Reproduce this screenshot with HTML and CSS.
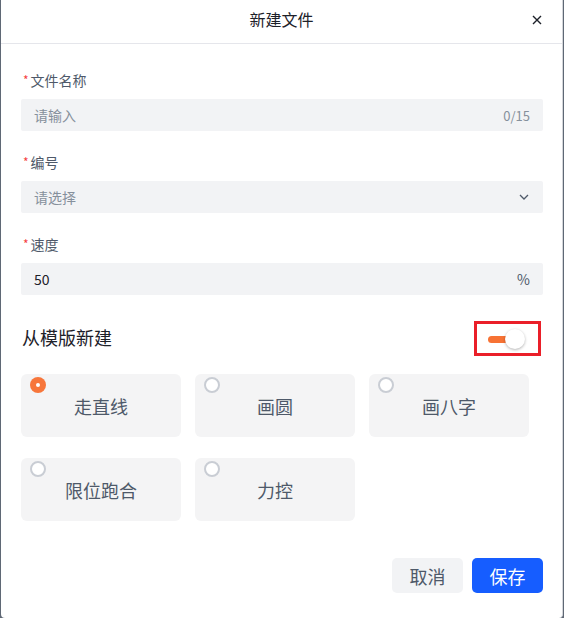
FILE: index.html
```html
<!DOCTYPE html>
<html>
<head>
  <meta charset="utf-8">
  <title>新建文件</title>
  <link rel="stylesheet" href="styles.css">
</head>
<body>
  <div class="dialog">
    <div class="dialog-header">
      <span></span>
      <span class="dialog-title">新建文件</span>
      <span class="close">
        <svg width="10" height="10" viewBox="0 0 10 10"><path d="M1 1L9 9M9 1L1 9" stroke="#1d2129" stroke-width="1.4" fill="none"/></svg>
      </span>
    </div>

    <div class="dialog-body">
      <div class="form-item">
        <label class="label"><span class="star">*</span>文件名称</label>
        <div class="field">
          <span class="placeholder">请输入</span>
          <span class="suffix count">0/15</span>
        </div>
      </div>

      <div class="form-item">
        <label class="label"><span class="star">*</span>编号</label>
        <div class="field">
          <span class="placeholder">请选择</span>
          <svg class="chevron" width="10" height="6" viewBox="0 0 10 6"><path d="M1 1L5 5L9 1" stroke="#4e5969" stroke-width="1.3" fill="none"/></svg>
        </div>
      </div>

      <div class="form-item">
        <label class="label"><span class="star">*</span>速度</label>
        <div class="field">
          <span class="value">50</span>
          <span class="suffix">%</span>
        </div>
      </div>

      <div class="template-row">
        <span class="template-title">从模版新建</span>
        <div class="switch-box">
          <div class="switch">
            <span class="track"></span>
            <span class="thumb"></span>
          </div>
        </div>
      </div>

      <div class="cards">
        <div class="card"><span class="radio checked"></span>走直线</div>
        <div class="card"><span class="radio"></span>画圆</div>
        <div class="card"><span class="radio"></span>画八字</div>
        <div class="card"><span class="radio"></span>限位跑合</div>
        <div class="card"><span class="radio"></span>力控</div>
      </div>
    </div>

    <div class="dialog-footer">
      <button class="btn btn-cancel">取消</button>
      <button class="btn btn-save">保存</button>
    </div>
  </div>
</body>
</html>
```

FILE: styles.css
```css
html, body {
  margin: 0;
  height: 100%;
}
body {
  background-color: #5f6875;
  font-family: "Noto Sans CJK SC", "Noto Sans", sans-serif;
  overflow: hidden;
}
.dialog {
  margin-left: 1px;
  width: 562px;
  height: 618px;
  background: #fff;
  border-right: 1px solid #d4d6da;
  border-radius: 0 0 4px 4px;
  box-sizing: border-box;
}
.dialog-header {
  height: 44px;
  padding-bottom: 5px;
  border-bottom: 1px solid #e5e6eb;
  display: grid;
  grid-template-columns: 1fr auto 1fr;
  align-items: center;
  box-sizing: border-box;
}
.dialog-title {
  font-size: 16px;
  line-height: 22px;
  color: #1d2129;
}
.close {
  justify-self: end;
  margin-right: 20px;
  display: flex;
  margin-top: 1px;
}
.dialog-body {
  padding: 25px 19px 0 20px;
}
.form-item {
  margin-bottom: 20px;
}
.label {
  display: flex;
  align-items: center;
  height: 22px;
  font-size: 14px;
  line-height: 22px;
  color: #4e5969;
  margin-bottom: 8px;
}
.star {
  color: #f53f3f;
  font-size: 12px;
  line-height: 12px;
  margin: 0 2px 0 2px;
}
.field {
  height: 32px;
  background: #f2f3f5;
  border-radius: 2px;
  display: flex;
  align-items: center;
  justify-content: space-between;
  padding: 0 13px 0 13px;
  font-size: 14px;
}
.placeholder {
  color: #86909c;
}
.value {
  color: #1d2129;
}
.suffix {
  color: #4e5969;
}
.count {
  color: #86909c;
  font-size: 13px;
}
.chevron {
  margin-right: 1px;
}
.template-row {
  display: flex;
  align-items: center;
  justify-content: space-between;
  margin-top: 26px;
  height: 35px;
}
.template-title {
  font-size: 18px;
  line-height: 26px;
  color: #1d2129;
  margin-left: 1px;
  margin-bottom: 3px;
}
.switch-box {
  width: 61px;
  height: 29px;
  border: 3px solid #ea1f29;
  display: flex;
  align-items: center;
  justify-content: center;
  margin-right: 2px;
}
.switch {
  position: relative;
  width: 38px;
  height: 22px;
  margin-right: 2px;
}
.track {
  position: absolute;
  left: 0;
  top: 8px;
  width: 26px;
  height: 7px;
  border-radius: 4px;
  background: #f77234;
}
.thumb {
  position: absolute;
  right: 1px;
  top: 1px;
  width: 20px;
  height: 20px;
  border-radius: 50%;
  background: #fff;
  box-shadow: 0 1px 3px rgba(0, 0, 0, 0.3);
}
.cards {
  display: grid;
  grid-template-columns: repeat(3, 160px);
  column-gap: 14px;
  row-gap: 21px;
  margin-top: 18px;
}
.card {
  position: relative;
  height: 63px;
  background: #f4f4f5;
  border-radius: 6px;
  display: flex;
  align-items: center;
  justify-content: center;
  font-size: 18px;
  color: #4e5969;
}
.radio {
  position: absolute;
  left: 9px;
  top: 3px;
  width: 16px;
  height: 16px;
  border-radius: 50%;
  border: 2px solid #c9cdd4;
  background: #fff;
  box-sizing: border-box;
}
.radio.checked {
  border: none;
  background: #f7763b;
}
.radio.checked::after {
  content: "";
  position: absolute;
  left: 6px;
  top: 6px;
  width: 4px;
  height: 4px;
  border-radius: 50%;
  background: #fff;
}
.dialog-footer {
  display: flex;
  justify-content: flex-end;
  gap: 9px;
  padding: 37px 19px 0 0;
}
.btn {
  width: 71px;
  height: 35px;
  border: none;
  border-radius: 5px;
  font-family: inherit;
  font-size: 18px;
  cursor: pointer;
  padding: 0;
}
.btn-cancel {
  background: #f2f3f5;
  color: #4e5969;
}
.btn-save {
  background: #165dff;
  color: #fff;
}
```
